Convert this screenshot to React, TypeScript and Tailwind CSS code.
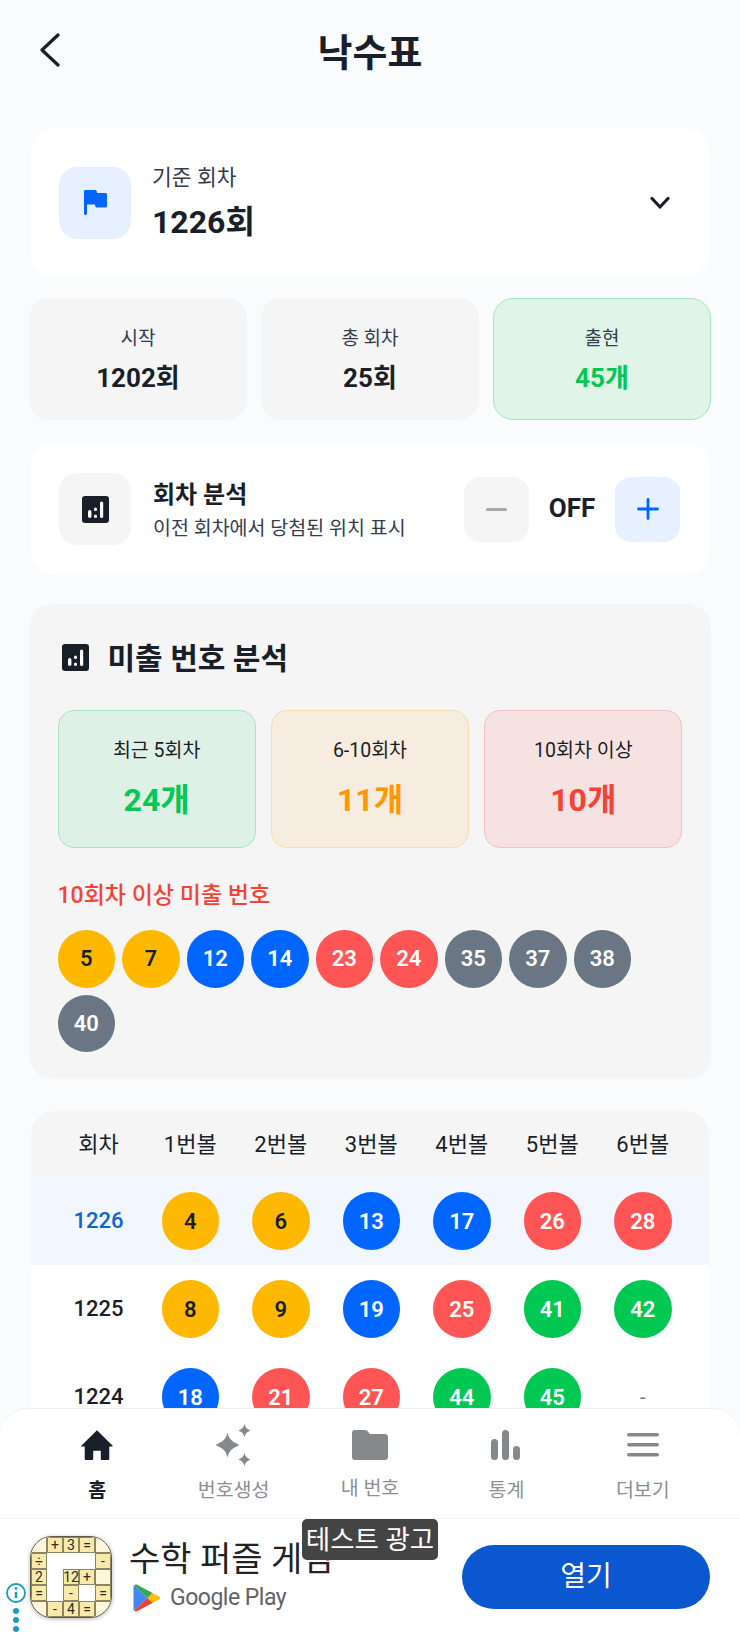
const yellow = 'bg-[#FFB800] text-[#191F28]';
const blue = 'bg-[#0066FF] text-white';
const red = 'bg-[#FF5555] text-white';
const gray = 'bg-[#6B7684] text-white';
const green = 'bg-[#00C853] text-white';

function ballColor(n: number) {
  if (n <= 10) return yellow;
  if (n <= 20) return blue;
  if (n <= 30) return red;
  if (n <= 40) return gray;
  return green;
}

function Ball({ n }: { n: number }) {
  return (
    <div className={`flex h-[57.5px] w-[57.5px] shrink-0 items-center justify-center rounded-full text-[22px] font-semibold ${ballColor(n)}`}>
      {n}
    </div>
  );
}

function ChartIcon() {
  return (
    <svg width="27" height="27" viewBox="0 0 27 27">
      <rect width="27" height="27" rx="3" fill="#191F28" />
      <rect x="6" y="14" width="3.4" height="8" rx="1.7" fill="#fff" />
      <rect x="12" y="11.500" width="3" height="3.4" rx="1.5" fill="#fff" />
      <rect x="12" y="18.600" width="3" height="3.4" rx="1.5" fill="#fff" />
      <rect x="18" y="5.500" width="3.2" height="16.500" rx="1.6" fill="#fff" />
    </svg>
  );
}

function StatCard({ label, value, active }: { label: string; value: string; active?: boolean }) {
  return (
    <div className={`flex h-[122px] flex-col items-center justify-center rounded-[20px] border-[1.5px] ${active ? 'border-[#A3E4BE] bg-[#E0F5E8]' : 'border-[#F5F5F5] bg-[#F5F5F5]'}`}>
      <div className="mt-[2px] text-[19px] leading-[28px] text-[#333D4B]">{label}</div>
      <div className={`mt-[8px] text-[26px] leading-[34px] font-bold ${active ? 'text-[#00C853]' : 'text-[#191F28]'}`}>{value}</div>
    </div>
  );
}

function MissCard({ label, value, box, text }: { label: string; value: string; box: string; text: string }) {
  return (
    <div className={`flex h-[138px] flex-col items-center rounded-[16px] border-[1.5px] pt-[26px] ${box}`}>
      <div className="text-[19.5px] leading-[28px] text-[#191F28]">{label}</div>
      <div className={`mt-[14px] text-[32px] leading-[42px] font-bold ${text}`}>{value}</div>
    </div>
  );
}

const missed = [5, 7, 12, 14, 23, 24, 35, 37, 38, 40];
const rows: { round: number; nums: (number | null)[]; current?: boolean }[] = [
  { round: 1226, nums: [4, 6, 13, 17, 26, 28], current: true },
  { round: 1225, nums: [8, 9, 19, 25, 41, 42] },
  { round: 1224, nums: [18, 21, 27, 44, 45, null] },
];

const navItems = [
  { label: '홈', active: true },
  { label: '번호생성' },
  { label: '내 번호' },
  { label: '통계' },
  { label: '더보기' },
];

function NavIcon({ index }: { index: number }) {
  if (index === 0) {
    return (
      <svg width="34" height="34" viewBox="0 0 36 36" fill="#191F28">
        <path d="M18 2.500 1.600 18.400c-.5.5-.2 1.100.4 1.100H5v13c0 .8.600 1.400 1.400 1.400h6.200c.8 0 1.400-.6 1.400-1.400V24h8v8.500c0 .8.600 1.400 1.400 1.400h6.200c.8 0 1.400-.6 1.400-1.400v-13h3c.6 0 .9-.6.400-1.100L18 2.500Z" />
      </svg>
    );
  }
  if (index === 1) {
    return (
      <svg width="39" height="42" viewBox="0 0 38 42" fill="#86898C">
        <path d="M13 8.500c1.400 6 3.500 8.700 12 12.500-8.500 3.800-10.600 6.500-12 12.500C11.600 27.500 9.500 24.800 1 21c8.500-3.800 10.600-6.500 12-12.500Z" />
        <path d="M30 0c.8 3.200 2 4.600 6 6.500-4 1.900-5.200 3.300-6 6.500-.8-3.200-2-4.600-6-6.500 4-1.900 5.200-3.300 6-6.500Z" />
        <path d="M30 29c.8 3.200 2 4.600 6 6.500-4 1.900-5.200 3.300-6 6.500-.8-3.200-2-4.600-6-6.500 4-1.900 5.200-3.300 6-6.500Z" />
      </svg>
    );
  }
  if (index === 2) {
    return (
      <svg width="36" height="30" viewBox="0 0 36 30" fill="#86898C">
        <path d="M3 0h10c1 0 1.800.4 2.400 1.100L18 4h15c1.700 0 3 1.300 3 3v20c0 1.700-1.300 3-3 3H3c-1.700 0-3-1.300-3-3V3c0-1.700 1.300-3 3-3Z" />
      </svg>
    );
  }
  if (index === 3) {
    return (
      <svg width="30" height="30" viewBox="0 0 30 30" fill="#86898C">
        <rect x="0" y="9" width="7" height="21" rx="3.500" />
        <rect x="11" y="0" width="7" height="30" rx="3.500" />
        <rect x="22" y="16" width="7" height="14" rx="3.500" />
      </svg>
    );
  }
  return (
    <svg width="32" height="24" viewBox="0 0 32 24" fill="#86898C">
      <rect x="0" y="0" width="32" height="3.600" rx="1.800" />
      <rect x="0" y="10" width="32" height="3.600" rx="1.800" />
      <rect x="0" y="20" width="32" height="3.600" rx="1.800" />
    </svg>
  );
}

const puzzle = [
  ['', '+', '3', '=', ''],
  ['÷', null, null, null, '-'],
  ['2', null, '12', '+', ' '],
  ['=', null, '-', null, '='],
  ['', '-', '4', '=', ''],
];

function PuzzleIcon() {
  return (
    <div className="grid h-[82px] w-[82px] shrink-0 grid-cols-5 grid-rows-5 overflow-hidden rounded-[22px] border border-[#5F5A48] bg-white shadow-[0_1px_4px_rgba(0,0,0,0.3)]">
      {puzzle.flat().map((c, i) => (
        <div
          key={i}
          className={`flex items-center justify-center text-[14px] leading-none text-[#2B2B2B] ${
            c === null ? 'bg-white' : c === '' || c === ' ' ? 'border-[0.5px] border-[#8C8660] bg-[#FDF6DC]' : 'border-[0.5px] border-[#8C8660] bg-[#FBE9A9]'
          }`}
        >
          {c}
        </div>
      ))}
    </div>
  );
}

function PlayIcon() {
  return (
    <svg width="28" height="30" viewBox="0 0 28 30">
      <path d="M1 2.500 14.500 15 1 27.500C.6 27 .5 26.500.5 26V4c0-.5.200-1 .5-1.500Z" fill="#4285F4" />
      <path d="M1 2.500c.8-1 2.300-1.300 3.500-.6L19.500 10l-5 5L1 2.500Z" fill="#34A853" />
      <path d="M19.500 10 26 13.600c1.500.8 1.500 2.100 0 2.900L19.500 20l-5-5 5-5Z" fill="#FBBC04" />
      <path d="M14.500 15l5 5-15 8.100c-1.200.7-2.700.4-3.500-.6L14.500 15Z" fill="#EA4335" />
    </svg>
  );
}

export default function App() {
  return (
    <div className="relative h-[1634px] w-[740px] overflow-hidden bg-[#F9FBFD] font-['Roboto','Noto_Sans_CJK_KR',sans-serif] text-[#191F28]">
      <header className="flex h-[100px] items-center justify-between px-[39px]">
        <svg width="22" height="34" viewBox="0 0 22 34" fill="none" stroke="#191F28" strokeWidth="3.200" strokeLinecap="round" strokeLinejoin="round">
          <path d="M19 2 3 17l16 15" />
        </svg>
        <h1 className="pt-[6px] text-[38px] font-bold">낙수표</h1>
        <div className="w-[22px]" />
      </header>

      <main className="mt-[28px] px-[29px]">
        {/* 기준 회차 */}
        <section className="mx-[2px] flex h-[149px] items-center rounded-[24px] bg-white pr-[39px] pl-[28px]">
          <div className="flex h-[72px] w-[72px] items-center justify-center rounded-[18px] bg-[#E6F0FF]">
            <svg width="23" height="25" viewBox="0 0 23 25" fill="#0066FF">
              <path d="M0 1.500C0 .7.700 0 1.500 0H11c1 0 1.600.6 1.800 1.400L13 3h8.500c.8 0 1.500.7 1.500 1.500V16c0 .8-.7 1.500-1.500 1.500H13c-1 0-1.500-.5-1.700-1.300L11 14.500H3v9c0 .8-.7 1.500-1.500 1.500S0 24.300 0 23.500V1.500Z" />
            </svg>
          </div>
          <div className="ml-[21px] flex-1">
            <div className="-mt-[1px] text-[21.5px] leading-[30px] text-[#333D4B]">기준 회차</div>
            <div className="mt-[9px] text-[32px] leading-[40px] font-bold">1226회</div>
          </div>
          <svg width="20" height="14" viewBox="0 0 20 14" fill="none" stroke="#191F28" strokeWidth="3.200" strokeLinecap="round" strokeLinejoin="round">
            <path d="M2 2.500 10 11l8-8.500" />
          </svg>
        </section>

        <section className="mt-[21px] grid grid-cols-3 gap-[14px]">
          <StatCard label="시작" value="1202회" />
          <StatCard label="총 회차" value="25회" />
          <StatCard label="출현" value="45개" active />
        </section>

        {/* 회차 분석 */}
        <section className="mx-[2px] mt-[23px] flex h-[132px] items-center rounded-[24px] bg-white pr-[29px] pl-[28px]">
          <div className="flex h-[72px] w-[72px] items-center justify-center rounded-[18px] bg-[#F5F5F5]">
            <ChartIcon />
          </div>
          <div className="ml-[22px] flex-1">
            <div className="pt-[2px] text-[24px] leading-[34px] font-bold">회차 분석</div>
            <div className="mt-[3px] text-[19.5px] leading-[28px] text-[#333D4B]">이전 회차에서 당첨된 위치 표시</div>
          </div>
          <button className="flex h-[65px] w-[65px] items-center justify-center rounded-[16px] bg-[#F5F5F5]">
            <div className="h-[3px] w-[21px] rounded-full bg-[#A5A8AC]" />
          </button>
          <div className="w-[86px] pb-[2px] text-center text-[26px] font-bold">OFF</div>
          <button className="flex h-[65px] w-[65px] items-center justify-center rounded-[16px] bg-[#E6F0FF]">
            <svg width="22" height="22" viewBox="0 0 22 22" stroke="#0066FF" strokeWidth="2.800" strokeLinecap="round">
              <path d="M11 1.500v19M1.500 11h19" />
            </svg>
          </button>
        </section>

        {/* 미출 번호 분석 */}
        <section className="mt-[29px] rounded-[24px] bg-[#F5F5F5] px-[28.5px] pt-[33px] pb-[27px]">
          <div className="flex h-[40px] items-center gap-[19px] pl-[4px]">
            <ChartIcon />
            <h2 className="pt-[2px] text-[30px] font-bold">미출 번호 분석</h2>
          </div>
          <div className="mt-[33px] grid grid-cols-3 gap-[15px]">
            <MissCard label="최근 5회차" value="24개" box="border-[#ABE3C3] bg-[#DFF1E6]" text="text-[#00C853]" />
            <MissCard label="6-10회차" value="11개" box="border-[#F8DDB0] bg-[#F6ECDF]" text="text-[#FF9800]" />
            <MissCard label="10회차 이상" value="10개" box="border-[#F6C0BD] bg-[#F7E2E2]" text="text-[#F44336]" />
          </div>
          <div className="mt-[34px] text-[23px] leading-[28px] font-medium text-[#F44336]">10회차 이상 미출 번호</div>
          <div className="mt-[20px] flex flex-wrap gap-[7px]">
            {missed.map((n) => (
              <Ball key={n} n={n} />
            ))}
          </div>
        </section>

        {/* 낙수표 */}
        <section className="mx-[2px] mt-[32px] overflow-hidden rounded-t-[24px] bg-white">
          <div className="grid h-[66px] grid-cols-[93px_repeat(6,1fr)] items-center bg-[#F5F5F5] px-[21px] text-center text-[22px]">
            {['회차', '1번볼', '2번볼', '3번볼', '4번볼', '5번볼', '6번볼'].map((h) => (
              <div key={h}>{h}</div>
            ))}
          </div>
          {rows.map((row) => (
            <div
              key={row.round}
              className={`grid h-[88px] grid-cols-[93px_repeat(6,1fr)] items-center px-[21px] text-center ${row.current ? 'bg-[#F2F6FF]' : 'bg-white'}`}
            >
              <div className={`pb-[2px] text-[22px] font-medium ${row.current ? 'text-[#0B63D6]' : 'text-[#191F28]'}`}>{row.round}</div>
              {row.nums.map((n, i) => (
                <div key={i} className="flex justify-center">
                  {n === null ? <span className="text-[20px] text-[#6B7684]">-</span> : <Ball n={n} />}
                </div>
              ))}
            </div>
          ))}
        </section>
      </main>

      {/* 하단 탭 + 광고 */}
      <div className="absolute right-0 bottom-0 left-0">
        <nav className="grid h-[110px] grid-cols-5 rounded-t-[28px] border-t border-[#EEEEEE] bg-white px-[29px]">
          {navItems.map((item, i) => (
            <div key={item.label} className="flex flex-col items-center">
              <div className="flex h-[66px] items-center justify-center pt-[6px]">
                <NavIcon index={i} />
              </div>
              <div className={`text-[19.5px] leading-[28px] ${i === 2 ? 'mt-0' : 'mt-[2px]'} ${item.active ? 'font-bold text-[#191F28]' : 'text-[#8B8E92]'}`}>{item.label}</div>
            </div>
          ))}
        </nav>
        <div className="relative flex h-[116px] items-center border-t border-[#F4F4F4] bg-white pr-[30px] pl-[30px]">
          <PuzzleIcon />
          <div className="ml-[17px] flex-1 self-start pt-[17px]">
            <div className="text-[34px] leading-[46px] text-[#222222]">수학 퍼즐 게임</div>
            <div className="mt-[1px] flex items-center gap-[9px] pl-[4px]">
              <PlayIcon />
              <span className="text-[23px] leading-[30px] tracking-[-0.5px] text-[#5F6368]">Google Play</span>
            </div>
          </div>
          <button className="flex h-[64px] w-[248px] items-center justify-center rounded-full bg-[#0B57D0] text-[28px] text-white">열기</button>

          <div className="absolute top-0 left-[302px] flex h-[41px] w-[136px] items-center justify-center rounded-[5px] bg-[#444444] text-[26.5px] text-white">테스트 광고</div>

          <div className="absolute top-[64px] left-[6px] flex flex-col items-center">
            <svg width="20" height="20" viewBox="0 0 20 20" fill="none" stroke="#1A9CBE">
              <circle cx="10" cy="10" r="9" strokeWidth="1.800" />
              <path d="M10 9v6" strokeWidth="2.400" />
              <circle cx="10" cy="5.500" r="1" fill="#1A9CBE" />
            </svg>
            <div className="mt-[5px] flex flex-col gap-[3px]">
              <div className="h-[6px] w-[6px] rounded-full bg-[#1A9CBE]" />
              <div className="h-[6px] w-[6px] rounded-full bg-[#1A9CBE]" />
              <div className="h-[6px] w-[6px] rounded-full bg-[#1A9CBE]" />
            </div>
          </div>
        </div>
      </div>
    </div>
  );
}
